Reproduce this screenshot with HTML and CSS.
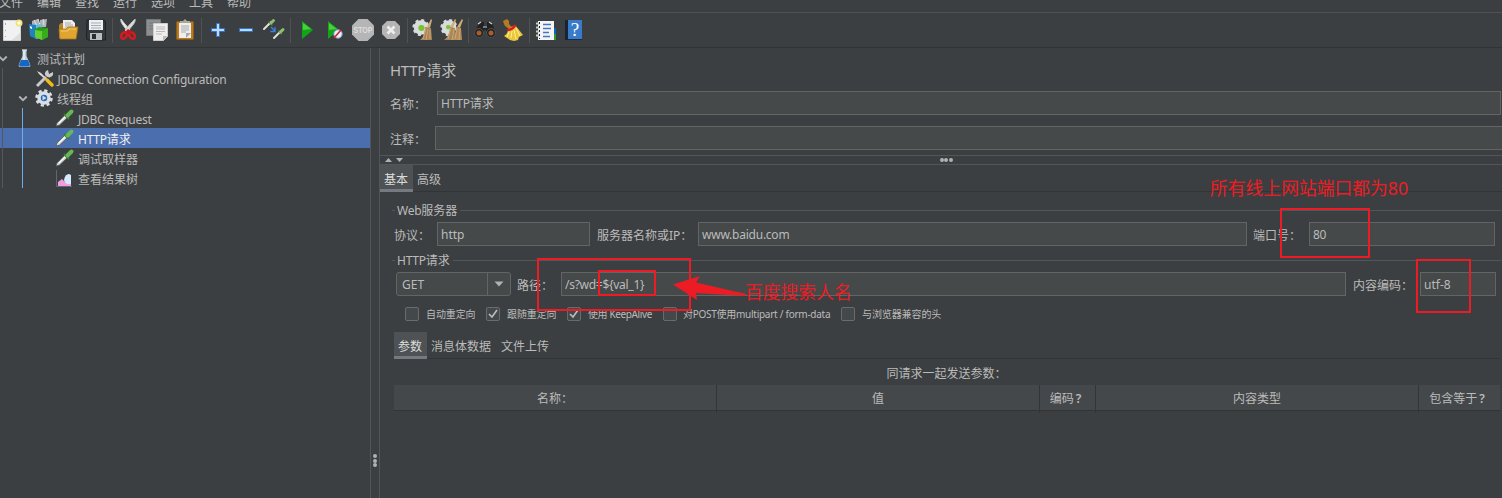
FILE: index.html
```html
<!DOCTYPE html>
<html lang="zh-CN">
<head>
<meta charset="utf-8">
<title>HTTP请求</title>
<link rel="stylesheet" href="styles.css">
</head>
<body>
<div class="app">
  <nav class="menu"><span>文件</span><span>编辑</span><span>查找</span><span>运行</span><span>选项</span><span>工具</span><span>帮助</span></nav>
  <div class="toolbar">
    <svg class="tool" viewBox="0 0 28 28"><path d="M5.500 4.500h17v20h-17z" fill="#f1f1f1" stroke="#d2d2d2"/><path d="M7.500 7v2M7.500 14v1M7.500 20v1" stroke="#aaa"/><path d="M22 17v7h-8z" fill="#ddd"/><circle cx="21" cy="7" r="3.500" fill="#eee27a"/><circle cx="21" cy="7" r="1.700" fill="#fffef0"/></svg>
    <svg class="tool" viewBox="0 0 28 28"><path d="M6 5l6-2 2 8H6zM14 4l7-1-1 8h-6z" fill="#aeb4b8"/><path d="M8 4l3 6M12 3l2 6M17 3l1 6" stroke="#e0e3e5"/><path d="M3 8l7 1v14l-6-3z" fill="#1d84c4"/><path d="M10 9l6-1v14l-6 1z" fill="#67b9e4"/><path d="M4 10l2 1v2l-2-1z" fill="#fff"/><path d="M9 13l4-2 9 1v9l-6 3-7-3z" fill="#299a16"/><path d="M9 14l7 1v9l-7-3z" fill="#64ce2e"/><path d="M16 15l6-3v9l-6 3z" fill="#35ad1d"/></svg>
    <svg class="tool" viewBox="0 0 28 28"><path d="M5 9l2-2h6v15H5z" fill="#b78523"/><path d="M9 4h9l3 3v10H9z" fill="#eee"/><path d="M11 7h6M11 9h8M11 11h8" stroke="#aaa"/><path d="M5 13h7l2-2h10l-2 12H6z" fill="#dfa52e" stroke="#a87518" stroke-width=".8"/><path d="M7 15h7l1-2h7" stroke="#f2cc6c" fill="none"/></svg>
    <svg class="tool" viewBox="0 0 28 28"><path d="M5 4h17l1.500 2v18H6l-1.500-1z" fill="#36393c" stroke="#1f2123"/><path d="M7 4h14v10H7z" fill="#edf0f2"/><path d="M9 7h10M9 9.500h10M9 12h10" stroke="#a2adb6"/><path d="M8 17h12v7H8z" fill="#b9bcc0"/><path d="M10 18h4v5h-4z" fill="#2b2e30"/></svg>
    <i class="tool-sep"></i>
    <svg class="tool" viewBox="0 0 28 28"><path d="M6 3c-1 3 2 6 7 13l2-2C11 9 8 6 6 3z" fill="#eee" stroke="#ccc" stroke-width="1"/><path d="M20 3c1 3-2 6-8 13l-2-2c4-5 7-8 10-11z" fill="#ddd" stroke="#bbb" stroke-width="1"/><ellipse cx="9" cy="19.500" rx="2.500" ry="3.500" transform="rotate(35 9 19.500)" fill="none" stroke="#d81920" stroke-width="2.500"/><ellipse cx="17" cy="19.500" rx="2.500" ry="3.500" transform="rotate(-35 17 19.500)" fill="none" stroke="#d81920" stroke-width="2.500"/><path d="M11 15l2-2 3 2-1 3h-3z" fill="#ca1018"/></svg>
    <svg class="tool" viewBox="0 0 28 28"><path d="M3.500 3.500h14v16h-14z" fill="#8c8f91" stroke="#777"/><path d="M6 7h9M6 10h9M6 13h9" stroke="#777"/><path d="M10.500 7.500h14v13l-4 4h-10z" fill="#eee" stroke="#ccc"/><path d="M13 11h9M13 13h9M13 15.500h9M13 18h6" stroke="#b8b8b8"/><path d="M20 25v-5h5z" fill="#bbb"/></svg>
    <svg class="tool" viewBox="0 0 28 28"><rect x="5.500" y="5.500" width="17" height="18" rx="1" fill="#b67a21" stroke="#8e5914"/><path d="M8 7h12v15H8z" fill="#eee"/><path d="M9 7V5h3l2-2 2 2h3v2z" fill="#a6a899"/><path d="M10 10h8M10 12h8M10 14h8M10 16h5" stroke="#aaa"/><path d="M15 22v-5h5z" fill="#aaa"/></svg>
    <i class="tool-sep"></i>
    <svg class="tool" viewBox="0 0 28 28"><path d="M12.500 7.500h3v5h5v3h-5v5h-3v-5h-5v-3h5z" fill="#bcd9ff" stroke="#3473c6"/></svg>
    <svg class="tool" viewBox="0 0 28 28"><path d="M7.500 12.500h13v3h-13z" fill="#bcd9ff" stroke="#3473c6"/></svg>
    <svg class="tool" viewBox="0 0 28 28"><path d="M4 13l7-7" stroke="#e1e3dc" stroke-width="2" stroke-linecap="round"/><path d="M8.500 5.500l4 4" stroke="#497a30" stroke-width="1.500"/><path d="M11 7l2.500-2.500" stroke="#8fbd70" stroke-width="3" stroke-linecap="round"/><path d="M14 22l7-7" stroke="#e1e3dc" stroke-width="2" stroke-linecap="round"/><path d="M18 14.500l4 4" stroke="#497a30" stroke-width="1.500"/><path d="M20.500 16l2.500-2.500" stroke="#8fbd70" stroke-width="3" stroke-linecap="round"/><path d="M11 11l4 4m0-4v4.500h-4.500" stroke="#3b83e3" stroke-width="1.300" fill="none"/></svg>
    <i class="tool-sep"></i>
    <svg class="tool" viewBox="0 0 28 28"><path d="M9 5l11 9-11 9z" fill="#12a51a"/><path d="M10 7l8 6-8 1z" fill="#49cf3d"/></svg>
    <svg class="tool" viewBox="0 0 28 28"><path d="M7 5l11 9-11 9z" fill="#12a51a"/><path d="M8 7l8 6-8 1z" fill="#49cf3d"/><circle cx="17" cy="18" r="4.200" fill="#eaf1fb" stroke="#799cc9"/><path d="M13 22l7-8" stroke="#d3222a" stroke-width="1.600"/></svg>
    <svg class="tool" viewBox="0 0 28 28"><path d="M9.500 3h9L25 9.500v9L18.500 25h-9L3 18.500v-9z" fill="#b5b5b5"/><text x="14" y="17.200" textLength="19" lengthAdjust="spacingAndGlyphs" class="stop-text">STOP</text></svg>
    <svg class="tool" viewBox="0 0 28 28"><path d="M10 5h8l5 5v8l-5 5h-8l-5-5v-8z" fill="#b5b5b5"/><path d="M10.500 10.500l7 7m0-7l-7 7" stroke="#eee" stroke-width="2.700"/></svg>
    <i class="tool-sep"></i>
    <svg class="tool" viewBox="0 0 28 28"><circle cx="11" cy="11.500" r="5" fill="#bad5a8" stroke="#d9dcda" stroke-width="4.500"/><circle cx="11" cy="11.500" r="7.500" fill="none" stroke="#d9dcda" stroke-width="2.200" stroke-dasharray="3 2.890"/><circle cx="11.500" cy="12" r="3" fill="#76c435"/><path d="M21 3l1 1-2 8-3-1z" fill="#d1ae75"/><path d="M15 11l6 1 1 12H10c4-3 5-8 5-13z" fill="#aa8558"/><path d="M16 12l-3 11M18 13l-2 11M20 14v9" stroke="#cba673"/></svg>
    <svg class="tool" viewBox="0 0 28 28"><circle cx="11" cy="11.500" r="5" fill="#bad5a8" stroke="#d9dcda" stroke-width="4.500"/><circle cx="11" cy="11.500" r="7.500" fill="none" stroke="#d9dcda" stroke-width="2.200" stroke-dasharray="3 2.890"/><circle cx="10" cy="11" r="2" fill="#76c435"/><path d="M17 3l1 1-3 8-3-1zM24 3l1 1-3 8-3-1z" fill="#d1ae75"/><path d="M12 11l5 1 1 12H6c4-3 6-8 6-13z" fill="#aa8558"/><path d="M18 11l5 1 1 12H13c4-3 5-8 5-13z" fill="#b48d5c"/><path d="M13 12l-3 11M16 13l-2 11M19 12l-2 11M22 13l-1 11" stroke="#cba673"/></svg>
    <i class="tool-sep"></i>
    <svg class="tool" viewBox="0 0 28 28"><path d="M7 9l3-3h3v4h3V6h3l3 3 2 8h-8l-2-4-2 4H4z" fill="#202224"/><path d="M7 8l3-2M18 6l3 2M12 11h4" stroke="#d0d0d0" stroke-width="1.200"/><circle cx="8" cy="17" r="4.500" fill="#222" stroke="#4d5052"/><circle cx="20" cy="17" r="4.500" fill="#222" stroke="#4d5052"/><circle cx="8" cy="17" r="2.500" fill="#a85c30"/><circle cx="20" cy="17" r="2.500" fill="#a85c30"/></svg>
    <svg class="tool" viewBox="0 0 28 28"><path d="M4 5l4-2 2 2v3l3 3-3 2-4-3-1-2z" fill="#b57925"/><path d="M9 13l7-4 8 10-4 2-1 3-4 1-4-1-6-4c3-2 4-4 4-7z" fill="#eac63b"/><path d="M8.500 14c3 0 6-2 8-5" stroke="#d71d24" stroke-width="2.400" fill="none"/><path d="M10 16l-2 5M13 15l-1 7M15 14l2 9M17 12l4 8" stroke="#fff091"/></svg>
    <i class="tool-sep"></i>
    <svg class="tool" viewBox="0 0 28 28"><path d="M20 12h4v6h-4z" fill="#1662bd"/><path d="M20 18h4v6h-4z" fill="#299933"/><path d="M6 5h16v19H6z" fill="#f5f5f5"/><path d="M4 7.500h4M4 11.500h4M4 15.500h4M4 19.500h4" stroke="#ccc" stroke-width="2"/><path d="M7.500 6v17" stroke="#222" stroke-dasharray="2 2"/><path d="M11 8.500h8M11 12.500h8M11 16.500h6M11 20.500h7" stroke="#4479c1" stroke-width="1.300"/></svg>
    <svg class="tool" viewBox="0 0 28 28"><path d="M5 4h3v20H5z" fill="#182333"/><path d="M8 4h14v19H8z" fill="#397bc9"/><path d="M7 23.500h15" stroke="#172b43" stroke-width="1"/><text x="15" y="20" class="help-text">?</text></svg>
  </div>
  <main class="workspace">
    <aside class="tree">
      <div class="tree-row root"><svg class="chevron" viewBox="0 0 8 6"><path d="M1 1l3 3 3-3"/></svg><svg class="tree-icon" viewBox="0 0 20 20"><path d="M8.500 2h4v6l3.500 8q1 3-1 3H6q-2 0-1-3l3.500-8z" fill="#b9cddd"/><path d="M7 12h7l2 5-1 1.500H6L5 17z" fill="#1767c2"/><path d="M10 3v9M8 2h5" stroke="#fff"/></svg><span>测试计划</span></div>
      <div class="tree-row depth-one"><svg class="tree-icon" viewBox="0 0 20 20"><path d="M2 3l4 2 7 7-1 1-8-7z" fill="#ddd"/><path d="M2 18l9-9" stroke="#c8cac9" stroke-width="3"/><path d="M18 4l-4 2-1-4c-3 1-4 4-2 6s5 2 7-1z" fill="#c9cccc"/><path d="M12 12l5 5" stroke="#f2bb19" stroke-width="3.500" stroke-linecap="round"/></svg><span class="latin">JDBC Connection Configuration</span></div>
      <div class="tree-row group"><svg class="chevron" viewBox="0 0 8 6"><path d="M1 1l3 3 3-3"/></svg><svg class="tree-icon" viewBox="0 0 20 20"><circle cx="10" cy="10" r="7.500" fill="none" stroke="#d9dfe5" stroke-width="2.500" stroke-dasharray="3.200 2.690"/><circle cx="10" cy="10" r="5" fill="#2d68ae" stroke="#d9dfe5" stroke-width="3.500"/><path d="M8.500 7.500l4 2.500-4 2.500z" fill="#c9def5"/></svg><span>线程组</span></div>
      <div class="tree-row depth-two"><svg class="tree-icon" viewBox="0 0 20 20"><path d="M1 18l1-3 8-8 2.500 2.500-8 7.500z" fill="#dadddb" stroke="#55595a" stroke-width=".8"/><path d="M9 6l5 5" stroke="#397d32" stroke-width="2.200"/><path d="M12.500 7.500l4-4" stroke="#66b757" stroke-width="4" stroke-linecap="round"/><path d="M4 15l6-6" stroke="#fff"/></svg><span class="latin">JDBC Request</span></div>
      <div class="tree-row depth-two selected"><svg class="tree-icon" viewBox="0 0 20 20"><path d="M1 18l1-3 8-8 2.500 2.500-8 7.500z" fill="#dadddb" stroke="#55595a" stroke-width=".8"/><path d="M9 6l5 5" stroke="#397d32" stroke-width="2.200"/><path d="M12.500 7.500l4-4" stroke="#66b757" stroke-width="4" stroke-linecap="round"/><path d="M4 15l6-6" stroke="#fff"/></svg><span><b class="http">HTTP</b>请求</span></div>
      <div class="tree-row depth-two"><svg class="tree-icon" viewBox="0 0 20 20"><path d="M1 18l1-3 8-8 2.500 2.500-8 7.500z" fill="#dadddb" stroke="#55595a" stroke-width=".8"/><path d="M9 6l5 5" stroke="#397d32" stroke-width="2.200"/><path d="M12.500 7.500l4-4" stroke="#66b757" stroke-width="4" stroke-linecap="round"/><path d="M4 15l6-6" stroke="#fff"/></svg><span>调试取样器</span></div>
      <div class="tree-row depth-two"><svg class="tree-icon" viewBox="0 0 20 20"><path d="M1.500 2v16.500H17" stroke="#63676a" fill="none"/><path d="M3 18v-4l4-3 3 3 3-1 3 2v3z" fill="#ef9edd"/><path d="M9 12q1-6 5-6l2 1v9q-6 1-7-4z" fill="#d7eaff"/></svg><span>查看结果树</span></div>
      <i class="guide outer"></i><i class="guide inner"></i>
    </aside>
    <div class="divider"><i></i><i></i><i></i></div>
    <section class="panel">
      <h1><b class="http">HTTP</b>请求</h1>
      <div class="line name-line"><label>名称：</label><div class="input"><b class="http">HTTP</b>请求</div></div>
      <div class="line note-line"><label>注释：</label><div class="input"></div></div>
      <div class="splitter"><svg class="split-arrows" viewBox="0 0 20 6"><path d="M1 5l3.500-4L8 5zM12 1h7l-3.500 4z" fill="#afb1b3"/></svg><span class="dots"><i></i><i></i><i></i></span></div>
      <div class="tabs"><span class="tab active">基本</span><span class="tab">高级</span></div>
      <div class="content">
        <div class="legend web"><span><b class="latin">Web</b>服务器</span></div>
        <div class="server"><label>协议：</label><div class="input">http</div><label>服务器名称或IP：</label><div class="input latin">www.baidu.com</div><label>端口号：</label><div class="input latin">80</div></div>
        <div class="legend"><span><b class="http">HTTP</b>请求</span></div>
        <div class="request"><div class="select"><span>GET</span><svg viewBox="0 0 22 22"><path d="M6.500 8.500h9l-4.500 5z" fill="#afb1b3"/></svg></div><label>路径：</label><div class="input path">/s?wd=<span class="variable">${val_1}</span></div><label>内容编码：</label><div class="input">utf-8</div></div>
        <div class="checks">
          <label><i class="box"></i>自动重定向</label>
          <label><i class="box"><svg viewBox="0 0 12 12"><path d="M2 6l3 3 5-7"/></svg></i>跟随重定向</label>
          <label><i class="box"><svg viewBox="0 0 12 12"><path d="M2 6l3 3 5-7"/></svg></i>使用 KeepAlive</label>
          <label class="multipart"><i class="box"></i>对POST使用multipart / form-data</label>
          <label><i class="box"></i>与浏览器兼容的头</label>
        </div>
        <div class="tabs inner-tabs"><span class="tab active">参数</span><span class="tab">消息体数据</span><span class="tab">文件上传</span></div>
        <div class="caption">同请求一起发送参数：</div>
        <div class="table-head"><span>名称：</span><span>值</span><span>编码<b class="question">?</b></span><span>内容类型</span><span>包含等于<b class="question">?</b></span></div>
      </div>
    </section>
  </main>
  <div class="mark path-mark"></div><div class="mark value-mark"></div><div class="mark port-mark"></div><div class="mark encoding-mark"></div>
  <svg class="arrow" viewBox="0 0 74 26"><path d="M0 9.500L27 1l-4 6.500L73 19l-1 2-49-3 1 7z" fill="#ed1c24"/></svg>
  <div class="note person">百度搜索人名</div><div class="note port">所有线上网站端口都为80</div>
</div>
</body>
</html>
```
FILE: styles.css
```css
* { box-sizing: border-box; }
body { margin: 0; background: #3c3f41; color: #bbb; font: 12px/20px "Noto Sans", "Noto Sans CJK SC", sans-serif; }
b { font-weight: 400; }
.http { letter-spacing: -.25px; }
.latin { letter-spacing: -.24px; }
.app { position: relative; width: 1502px; height: 498px; overflow: hidden; display: flex; flex-direction: column; }
.menu { height: 13px; border-bottom: 1px solid #515151; display: flex; gap: 14px; overflow: hidden; flex: none; }
.menu span { flex: none; width: 24px; margin-top: -7px; }
.menu span:first-child { margin-left: -1px; }
.toolbar { height: 35px; padding: 3px 0 0; border-bottom: 1px solid #313335; display: flex; flex: none; }
.tool { width: 28px; height: 28px; flex: none; }
.tool:first-child { margin-left: -2px; }
.tool-sep { width: 1px; height: 25px; margin: 2px 2px 0; background: #515151; flex: none; }
.stop-text { font: bold 9px "Liberation Sans", sans-serif; fill: #ddd; text-anchor: middle; }
.help-text { font: 19px "Liberation Serif", serif; fill: #fff; text-anchor: middle; }
.workspace { display: flex; flex: 1; min-height: 0; }
.tree { width: 370px; position: relative; flex: none; }
.tree-row { height: 20px; display: flex; align-items: center; white-space: nowrap; padding-top: 1px; }
.tree-icon { width: 20px; height: 20px; margin-right: 3px; flex: none; margin-top: -1px; }
.tree-row > span { margin-top: 2px; }
.chevron { width: 10px; height: 8px; fill: none; stroke: #afb1b3; stroke-width: 1.5; flex: none; }
.root .chevron { margin: 0 6px 0 -2px; }
.depth-one { padding-left: 35px; }
.depth-one .tree-icon { margin-right: 2.5px; }
.group { padding-left: 18px; }
.group .chevron { margin-right: 6px; }
.depth-two { padding-left: 55px; }
.selected { background: #4b6eaf; color: #eee; }
.guide { position: absolute; width: 1px; }
.outer { left: 2px; top: 20px; height: 120px; background: #55585a; }
.inner { left: 22px; top: 60px; height: 80px; background: #6daee8; }
.divider { width: 10px; border: solid #555; border-width: 0 1px; display: flex; flex-direction: column; align-items: center; gap: .5px; padding-top: 406px; flex: none; }
.divider i, .dots i { width: 4px; height: 4px; border-radius: 50%; background: #afb1b3; }
.divider i { flex: none; }
.panel { flex: 1; min-width: 0; }
h1 { font-size: 15px; line-height: 20px; font-weight: 400; margin: 12px 0 11px 10px; }
.line { display: grid; height: 25px; padding-left: 10px; }
.name-line { grid-template-columns: 47px 1064px; }
.note-line { grid-template-columns: 45px 1070px; margin-top: 10px; }
.line label { line-height: 27px; }
.input { height: 24px; border: 1px solid #646464; background: #45494a; line-height: 24px; padding-left: 3px; white-space: pre; }
.path { letter-spacing: -.28px; }
.splitter { margin-top: 4px; height: 10px; border: solid #555; border-width: 1px 0; position: relative; display: flex; justify-content: center; align-items: center; padding-left: 10px; }
.split-arrows { position: absolute; left: 4px; top: 1px; width: 20px; height: 6px; }
.dots { display: flex; gap: .5px; }
.tabs { height: 27px; display: flex; border-bottom: 1px solid #323436; }
.tab { height: 27px; padding: 0 5px 0 4px; line-height: 29px; }
.tab.active { width: 33px; background: #4e5254; border-bottom: 3px solid #747a80; color: #ddd; }
.content { padding-left: 14px; }
.legend { height: 20px; display: flex; align-items: center; margin: 1px 1px 0 -2px; }
.legend span { padding-top: 2px; }
.web { margin-top: 8px; }
.legend::before { content: ""; width: 3px; height: 1px; background: #515658; margin-right: 2px; }
.legend::after { content: ""; flex: 1; height: 1px; background: #515658; margin-left: 3px; }
.server { margin-top: 2px; display: grid; grid-template-columns: 43px 153px 108px 549px 62px 186px; line-height: 27px; }
.server label:nth-of-type(2) { padding-left: 7px; }
.server label:nth-of-type(3) { padding-left: 6px; }
.request { margin: 2px 0 0 2px; display: grid; grid-template-columns: 115px 50px 785px 74px 76px; line-height: 27px; }
.request label { padding-left: 6px; white-space: nowrap; }
.request label:last-of-type { padding-left: 7px; }
.select { height: 24px; border: 1px solid #646464; border-radius: 3px; background: #45494a; display: flex; }
.select span { width: 91px; padding-left: 5px; line-height: 24px; border-right: 1px solid #646464; }
.select svg { width: 22px; height: 22px; }
.checks { height: 30px; margin-left: 11px; display: grid; grid-template-columns: 81px 81px 96px 178px 120px; align-items: center; font-size: 10px; }
.checks label { display: flex; align-items: center; gap: 7px; white-space: nowrap; letter-spacing: -.1px; }
.checks .multipart { letter-spacing: -.27px; gap: 6px; }
.checks label:nth-child(3) { letter-spacing: -.38px; }
.box { width: 14px; height: 14px; border: 1px solid #6b6b6b; background: #43494a; border-radius: 2px; flex: none; }
.box svg { display: block; width: 12px; height: 12px; fill: none; stroke: #bbb; stroke-width: 1.7; }
.inner-tabs { margin: 3px 2px 0 0; }
.inner-tabs .tab:nth-child(2) { padding-right: 6px; }
.caption { text-align: center; height: 26px; line-height: 29px; margin-right: 3px; }
.table-head { display: grid; grid-template-columns: 323px 323px 56px 323px 81px; height: 26px; background: #45484a; border-bottom: 1px solid #323436; text-align: center; line-height: 28px; width: 1106px; }
.table-head span { border-right: 1px solid #323436; white-space: nowrap; }
.table-head span:last-child { border: 0; padding-right: 5px; }
.question { margin-left: 2px; font-weight: 600; }
.table-head span:nth-child(3) { padding-right: 4px; }
.mark { position: absolute; border: 2px solid #ed1c24; }
.path-mark { left: 537px; top: 258px; width: 154px; height: 53px; }
.value-mark { left: 598px; top: 270px; width: 58px; height: 26px; }
.port-mark { left: 1280px; top: 208px; width: 90px; height: 50px; }
.encoding-mark { left: 1416px; top: 259px; width: 55px; height: 54px; }
.arrow { position: absolute; left: 673px; top: 275px; width: 74px; height: 26px; }
.note { position: absolute; color: #ed1c24; font-size: 17.8px; line-height: 24px; white-space: nowrap; }
.person { left: 745px; top: 280px; }
.port { left: 1210px; top: 176px; }
```
